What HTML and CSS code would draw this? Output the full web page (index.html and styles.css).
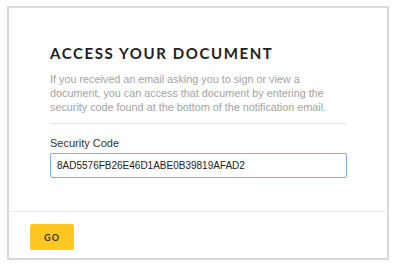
FILE: index.html
```html
<!DOCTYPE html>
<html lang="en">
<head>
    <meta charset="UTF-8">
    <title>Access your document</title>
    <link rel="stylesheet" href="styles.css">
</head>
<body>
    <div class="panel">
        <div class="panel-body">
            <h1 class="title">ACCESS YOUR DOCUMENT</h1>
            <p class="intro">If you received an email asking you to sign or view a document, you can access that document by entering the security code found at the bottom of the notification email.</p>
            <hr class="divider">
            <label class="field-label" for="code">Security Code</label>
            <input class="field-input" id="code" type="text" value="8AD5576FB26E46D1ABE0B39819AFAD2">
        </div>
        <div class="panel-footer">
            <button class="go-btn">GO</button>
        </div>
    </div>
</body>
</html>
```

FILE: styles.css
```css
:root {
    --border-color: #d9d9d9;
    --muted-text: #a3a3a3;
    --text-color: #333;
    --accent: #ffc820;
}
body {
    margin: 0;
    padding: 6px 6px 0 7px;
    background-color: #fff;
    font-family: 'Liberation Sans', Arial, sans-serif;
    color: var(--text-color);
}
.panel {
    width: 378px;
    border: 2px solid var(--border-color);
    background-color: #fff;
}
.panel-body {
    padding: 35px 40px 33px 41px;
}
.title {
    margin: 0 0 9px;
    font-family: 'Lato', sans-serif;
    font-weight: 700;
    font-size: 15px;
    letter-spacing: 1.6px;
    color: #222;
    line-height: 20px;
}
.intro {
    margin: 0;
    font-size: 10.8px;
    line-height: 14px;
    color: var(--muted-text);
}
.divider {
    border: none;
    border-top: 1px solid #e6e6e6;
    margin: 9px 0 12px;
}
.field-label {
    display: block;
    font-size: 11px;
    line-height: 14px;
    margin-bottom: 3px;
}
.field-input {
    display: block;
    width: 100%;
    box-sizing: border-box;
    height: 25px;
    padding: 0 6px;
    border: 1px solid #82aef0;
    border-radius: 2px;
    font-family: 'Liberation Sans', Arial, sans-serif;
    font-size: 10px;
    color: #222;
    outline: none;
}
.panel-footer {
    border-top: 1px solid #efefef;
    padding: 12px 21px 8px;
}
.go-btn {
    width: 44px;
    height: 26px;
    border: none;
    border-radius: 2px;
    background-color: var(--accent);
    font-family: 'Lato', sans-serif;
    font-weight: 700;
    font-size: 9px;
    letter-spacing: 1px;
    color: #333;
    padding: 0;
}
```
